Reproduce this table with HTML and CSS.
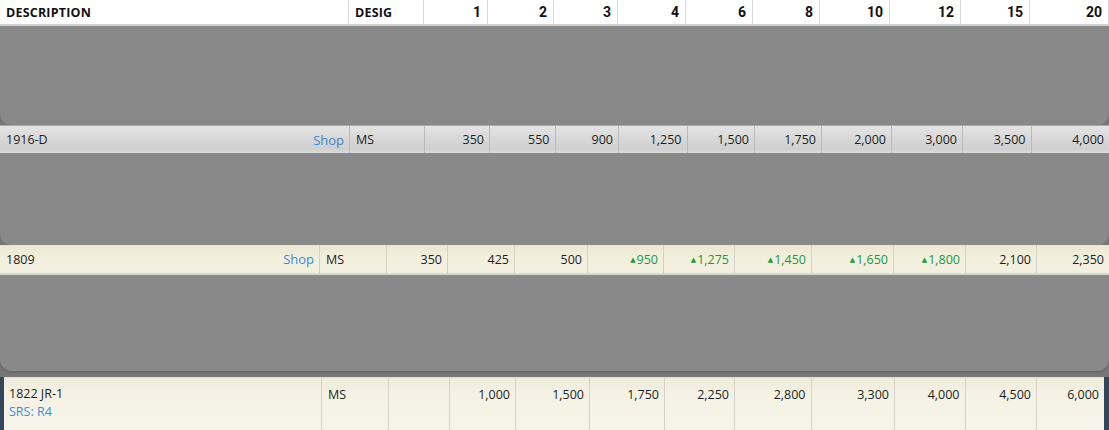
FILE: index.html
```html
<!DOCTYPE html>
<html>
<head>
<meta charset="utf-8">
<link rel="stylesheet" href="styles.css">
</head>
<body>
<div class="page">
  <div class="row head">
    <div class="c l">DESCRIPTION</div>
    <div class="c l">DESIG</div>
    <div class="c n">1</div><div class="c n">2</div><div class="c n">3</div><div class="c n">4</div>
    <div class="c n">6</div><div class="c n">8</div><div class="c n">10</div><div class="c n">12</div>
    <div class="c n">15</div><div class="c n">20</div>
  </div>
  <div class="panel p1"></div>
  <div class="row silver">
    <div class="c desc"><span>1916-D</span><a class="shop">Shop</a></div>
    <div class="c l">MS</div>
    <div class="c n">350</div><div class="c n">550</div><div class="c n">900</div><div class="c n">1,250</div>
    <div class="c n">1,500</div><div class="c n">1,750</div><div class="c n">2,000</div><div class="c n">3,000</div>
    <div class="c n">3,500</div><div class="c n">4,000</div>
  </div>
  <div class="panel p2"></div>
  <div class="row cream r2">
    <div class="c desc"><span>1809</span><a class="shop">Shop</a></div>
    <div class="c l">MS</div>
    <div class="c n">350</div><div class="c n">425</div><div class="c n">500</div>
    <div class="c n up"><i>&#9650;</i>950</div><div class="c n up"><i>&#9650;</i>1,275</div>
    <div class="c n up"><i>&#9650;</i>1,450</div><div class="c n up"><i>&#9650;</i>1,650</div>
    <div class="c n up"><i>&#9650;</i>1,800</div>
    <div class="c n">2,100</div><div class="c n">2,350</div>
  </div>
  <div class="panel p3"></div>
  <div class="frame">
    <div class="row cream2 r3">
      <div class="c l stack"><span>1822 JR-1</span><a class="srs">SRS: R4</a></div>
      <div class="c l">MS</div>
      <div class="c n"></div>
      <div class="c n">1,000</div><div class="c n">1,500</div><div class="c n">1,750</div><div class="c n">2,250</div>
      <div class="c n">2,800</div><div class="c n">3,300</div><div class="c n">4,000</div><div class="c n">4,500</div>
      <div class="c n">6,000</div>
    </div>
  </div>
</div>
</body>
</html>
```
FILE: styles.css
```css
* { box-sizing: border-box; }
html, body { margin: 0; padding: 0; }
body {
  width: 1109px;
  height: 430px;
  overflow: hidden;
  background: #777;
  font-family: "Open Sans", "DejaVu Sans", sans-serif;
  color: #1d1d1d;
}
.page { display: flex; flex-direction: column; }
.row {
  display: grid;
  font-size: 12.5px;
}
.c {
  display: flex;
  align-items: center;
  padding: 0 5px 0 6px;
  border-right: 1px solid #c9c9c9;
  white-space: nowrap;
}
.c:last-child { border-right: none; }
.c.l { justify-content: flex-start; }
.c.n { justify-content: flex-end; }

.head {
  height: 26px;
  background: #fff;
  border-bottom: 2px solid #d2d2d2;
  grid-template-columns: 349px 74.5px 64.5px 66px 64px 68px 67px 67px 70px 71px 69px 1fr;
  font-weight: 700;
  color: #111;
}
.head .c { border-right: 1.5px solid #dadada; }
.head .c.l { font-size: 12.5px; letter-spacing: 0.2px; }
.head .c.n { font-family: Roboto, "Liberation Sans", sans-serif; font-size: 14px; font-weight: 700; padding-right: 6px; }

.panel {
  background: #898989;
  border-radius: 0 0 12px 12px;
}
.p1 { height: 99px; }
.p2 { height: 92px; }
.p3 { height: 96px; box-shadow: 0 2px 2px rgba(0,0,0,0.12); margin-bottom: 6px; }

.silver {
  height: 28px;
  background: linear-gradient(#e4e4e4, #d6d6d6 55%, #cfcfcf 85%, #dcdcdc);
  grid-template-columns: 350px 75px 65px 65.5px 63.5px 68.5px 67.5px 67px 70px 71px 68.5px 1fr;
  border-top: 1px solid #a8a8a8;
}
.silver .c { border-right-color: #b9b9b9; }

.desc { justify-content: space-between; padding-right: 5px; }
.shop { color: #3a8bd8; font-size: 13px; }
.silver .shop { color: #3c86c9; }

.cream {
  height: 30px;
  background: linear-gradient(#ebe6d0, #f3efdd 40%, #f4f0e0);
  border-bottom: 2px solid #d6d6d0;
}
.r2 { grid-template-columns: 320px 67px 61px 67px 73px 76px 71px 77px 82px 72px 71px 1fr; }
.r2 .c { border-right-color: #d3d0c4; }

.up { color: #1a9a3c; }
.up i { font-style: normal; font-size: 7px; margin-right: 1px; }

.frame {
  background: #34475a;
  padding: 0 5px 0 4px;
  height: 60px;
}
.cream2 {
  height: 60px;
  background: linear-gradient(#eeebdc, #f5f2e5 25%, #f6f3e8);
  border-top: 1px solid #e2dfd2;
}
.r3 { grid-template-columns: 318px 67px 60.5px 66.5px 74px 75px 70px 76.5px 83.5px 70.5px 71.5px 1fr; }
.r3 .c { align-items: flex-start; padding-top: 8px; border-right-color: #d4d1c6; }
.stack { flex-direction: column; padding-left: 5px; }
.stack span { line-height: 16px; }
.srs { color: #3a8fe0; line-height: 20px; }
```
